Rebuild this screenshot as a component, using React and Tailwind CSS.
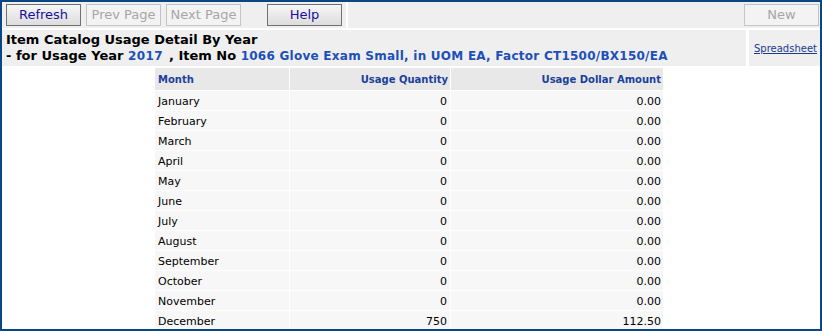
import React from 'react';

const rows = [
  { month: 'January', qty: '0', amount: '0.00' },
  { month: 'February', qty: '0', amount: '0.00' },
  { month: 'March', qty: '0', amount: '0.00' },
  { month: 'April', qty: '0', amount: '0.00' },
  { month: 'May', qty: '0', amount: '0.00' },
  { month: 'June', qty: '0', amount: '0.00' },
  { month: 'July', qty: '0', amount: '0.00' },
  { month: 'August', qty: '0', amount: '0.00' },
  { month: 'September', qty: '0', amount: '0.00' },
  { month: 'October', qty: '0', amount: '0.00' },
  { month: 'November', qty: '0', amount: '0.00' },
  { month: 'December', qty: '750', amount: '112.50' },
];

function Button({ label, disabled }) {
  return (
    <div
      className={`w-[75px] h-[22px] flex items-center justify-center text-[13px] border ${
        disabled
          ? 'border-[#c4c4c4] bg-[#f3f3f3] text-[#a6a6a6]'
          : 'border-[#707070] bg-gradient-to-b from-[#f6f6f6] to-[#dddddd] text-[#1a0f9c]'
      }`}
    >
      {label}
    </div>
  );
}

export default function App() {
  return (
    <div className="w-[822px] h-[331px] overflow-hidden bg-white border-[#0b4684] border-t-2 border-l-2 border-r-2 border-b-2 font-['DejaVu_Sans','Liberation_Sans',sans-serif] text-black">
      <div className="flex gap-[2px] h-[26px]">
        <div className="w-[344px] bg-[#efefef] flex items-center pl-[4px]">
          <div className="flex gap-[5px]">
            <Button label="Refresh" />
            <Button label="Prev Page" disabled />
            <Button label="Next Page" disabled />
          </div>
          <div className="ml-[26px]">
            <Button label="Help" />
          </div>
        </div>
        <div className="flex-1 bg-[#efefef] flex items-center justify-end pr-[1px]">
          <Button label="New" disabled />
        </div>
      </div>

      <div className="flex gap-[3px] h-[36px] mt-[2px]">
        <div className="flex-1 bg-[#efefef] pl-[4px] pt-[2px] leading-[16px]">
          <div className="text-[13px] font-bold">Item Catalog Usage Detail By Year</div>
          <div className="text-[13px] font-bold whitespace-nowrap">
            - for Usage Year <span className="text-[12px] text-[#1d4fb8] tracking-[0.4px]">2017</span>
            <span className="ml-[6px]">, Item No </span>
            <span className="text-[12px] text-[#1d4fb8] tracking-[0.25px]">
              1066 Glove Exam Small, in UOM EA, Factor CT1500/BX150/EA
            </span>
          </div>
        </div>
        <div className="w-[71px] bg-[#efefef] flex items-center pl-[5px]">
          <a className="text-[10px] underline text-[#1a3c8e]">Spreadsheet</a>
        </div>
      </div>

      <div className="ml-[153px] mt-[2px] w-[508px] grid grid-cols-[134px_160px_212px] gap-x-[1px] gap-y-[1px] bg-white text-[11px]">
        <div className="h-[22px] bg-[#e8e8e8] flex items-center pl-[3px] pt-[1px] text-[10px] font-bold text-[#1b3f9c]">Month</div>
        <div className="h-[22px] bg-[#e8e8e8] flex items-center justify-end pr-[2px] pt-[1px] text-[10px] font-bold text-[#1b3f9c]">Usage Quantity</div>
        <div className="h-[22px] bg-[#e8e8e8] flex items-center justify-end pr-[2px] pt-[1px] text-[10px] font-bold text-[#1b3f9c]">Usage Dollar Amount</div>
        {rows.map((r) => (
          <React.Fragment key={r.month}>
            <div className="h-[19px] bg-[#f7f7f7] flex items-center pl-[3px] pt-[3px]">{r.month}</div>
            <div className="h-[19px] bg-[#f7f7f7] flex items-center justify-end pr-[3px] pt-[3px]">{r.qty}</div>
            <div className="h-[19px] bg-[#f7f7f7] flex items-center justify-end pr-[2px] pt-[3px]">{r.amount}</div>
          </React.Fragment>
        ))}
      </div>
    </div>
  );
}
